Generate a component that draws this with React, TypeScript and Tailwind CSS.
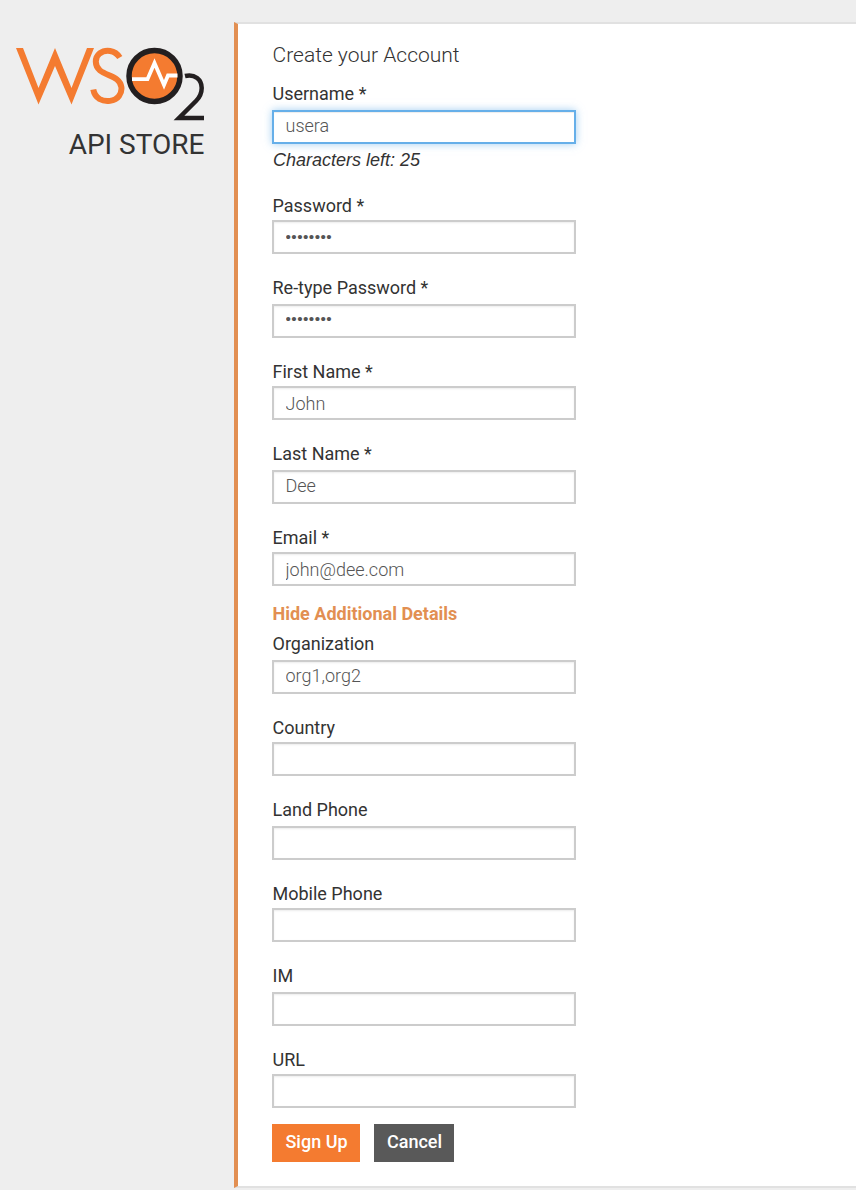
type FieldProps = {
  label: string;
  value?: string;
  type?: string;
  tight?: boolean;
  active?: boolean;
  helper?: string;
};

function Field({ label, value = "", type = "text", tight = false, active = false, helper }: FieldProps) {
  return (
    <div className="flex flex-col items-start">
      <label className="h-6 pt-px pl-[0.5px] text-[18px] leading-6 text-[#333]">{label}</label>
      <input
        type={type}
        defaultValue={value}
        className={
          "h-[34px] w-[304px] border-2 bg-white px-[11.5px] font-light text-[#555] outline-none " +
          (tight ? "mt-[3px] " : "mt-[5px] ") +
          (type === "password"
            ? "font-['Liberation_Sans'] text-[15.4px] tracking-[0.45px] " + (tight ? "" : "pb-[4px] ")
            : "text-[18px] " + (tight ? "pt-px " : "pb-[3px] ")) +
          (active
            ? "border-[#66afe9] shadow-[inset_0_1px_1px_rgba(0,0,0,0.075),0_0_8px_rgba(102,175,233,0.6)]"
            : "border-[#ccc] shadow-[inset_0_1px_2px_rgba(0,0,0,0.075)]")
        }
      />
      {helper && (
        <em className="mt-1 h-6 pl-px font-['Liberation_Sans'] text-[18px] leading-6 text-[#333]">{helper}</em>
      )}
    </div>
  );
}

function Logo() {
  return (
    <svg width="190" height="74" viewBox="15 47 190 74" fill="none" aria-label="WSO2">
      <path d="M16 48h7l15.500 40L55 48l16.500 40L87 48H94L71.500 104.500 55 66 38.500 104.500Z" fill="#f47b30" />
      <path d="M119.800 57.500C115 49.800 105.500 49 99.500 53.500C94.500 57.500 94.500 66 100 70.500C105 74.500 112 75.500 117 79.500C122 83.500 123 90.500 119 96C115 101.500 105.500 102.500 99.500 99C96 96.800 94 93.500 93.300 89.500" stroke="#f47b30" strokeWidth="6" />
      <circle cx="154.500" cy="76" r="25.500" fill="#f47b30" stroke="#231f20" strokeWidth="5.500" />
      <path d="M132 79.200H147.500L154.500 63L164 85L168 75.500H177.500" stroke="#fff" strokeWidth="3.800" />
      <path d="M185 76C195 73.500 201.700 80 201.700 88C201.700 94 200 97 196 101L179 118H204" stroke="#231f20" strokeWidth="4.500" />
    </svg>
  );
}

export default function App() {
  return (
    <div className="flex h-[1190px] w-full overflow-hidden bg-[#eee] font-[Roboto,sans-serif] text-[#333]">
      <aside className="flex w-[234px] shrink-0 flex-col items-end pt-[47px] pr-[29px]">
        <Logo />
        <div className="mt-[6px] pr-[0.5px] text-[28px] leading-9">API STORE</div>
      </aside>
      <main className="mt-[22px] h-[1166px] flex-1 border-y-2 border-l-4 border-y-[#e1e1e1] border-l-[#e28f52] bg-white pt-[17px] pl-[34px]">
        <h1 className="h-[40px] pl-[0.5px] text-[21px] leading-7 font-light">Create your Account</h1>
        <div className="flex flex-col gap-[21px]">
          <Field label="Username *" value="usera" active helper="Characters left: 25" />
          <Field label="Password *" value="password" type="password" tight />
          <Field label="Re-type Password *" value="password" type="password" />
          <Field label="First Name *" value="John" tight />
          <Field label="Last Name *" value="Dee" />
          <Field label="Email *" value="john@dee.com" tight />
        </div>
        <a href="#" className="mt-[15px] mb-[6px] block h-6 pt-px pl-[0.5px] text-[18px] leading-6 font-bold text-[#e28f52]">
          Hide Additional Details
        </a>
        <div className="flex flex-col gap-[21px]">
          <Field label="Organization" value="org1,org2" />
          <Field label="Country" tight />
          <Field label="Land Phone" />
          <Field label="Mobile Phone" tight />
          <Field label="IM" />
          <Field label="URL" tight />
        </div>
        <div className="mt-4 flex gap-[14px]">
          <button className="h-[38px] w-[88px] bg-[#f47b30] pb-[4px] pl-px text-[18px] font-medium text-white">Sign Up</button>
          <button className="h-[38px] w-[80px] bg-[#595959] pb-[4px] pl-px text-[18px] font-medium text-white">Cancel</button>
        </div>
      </main>
    </div>
  );
}
